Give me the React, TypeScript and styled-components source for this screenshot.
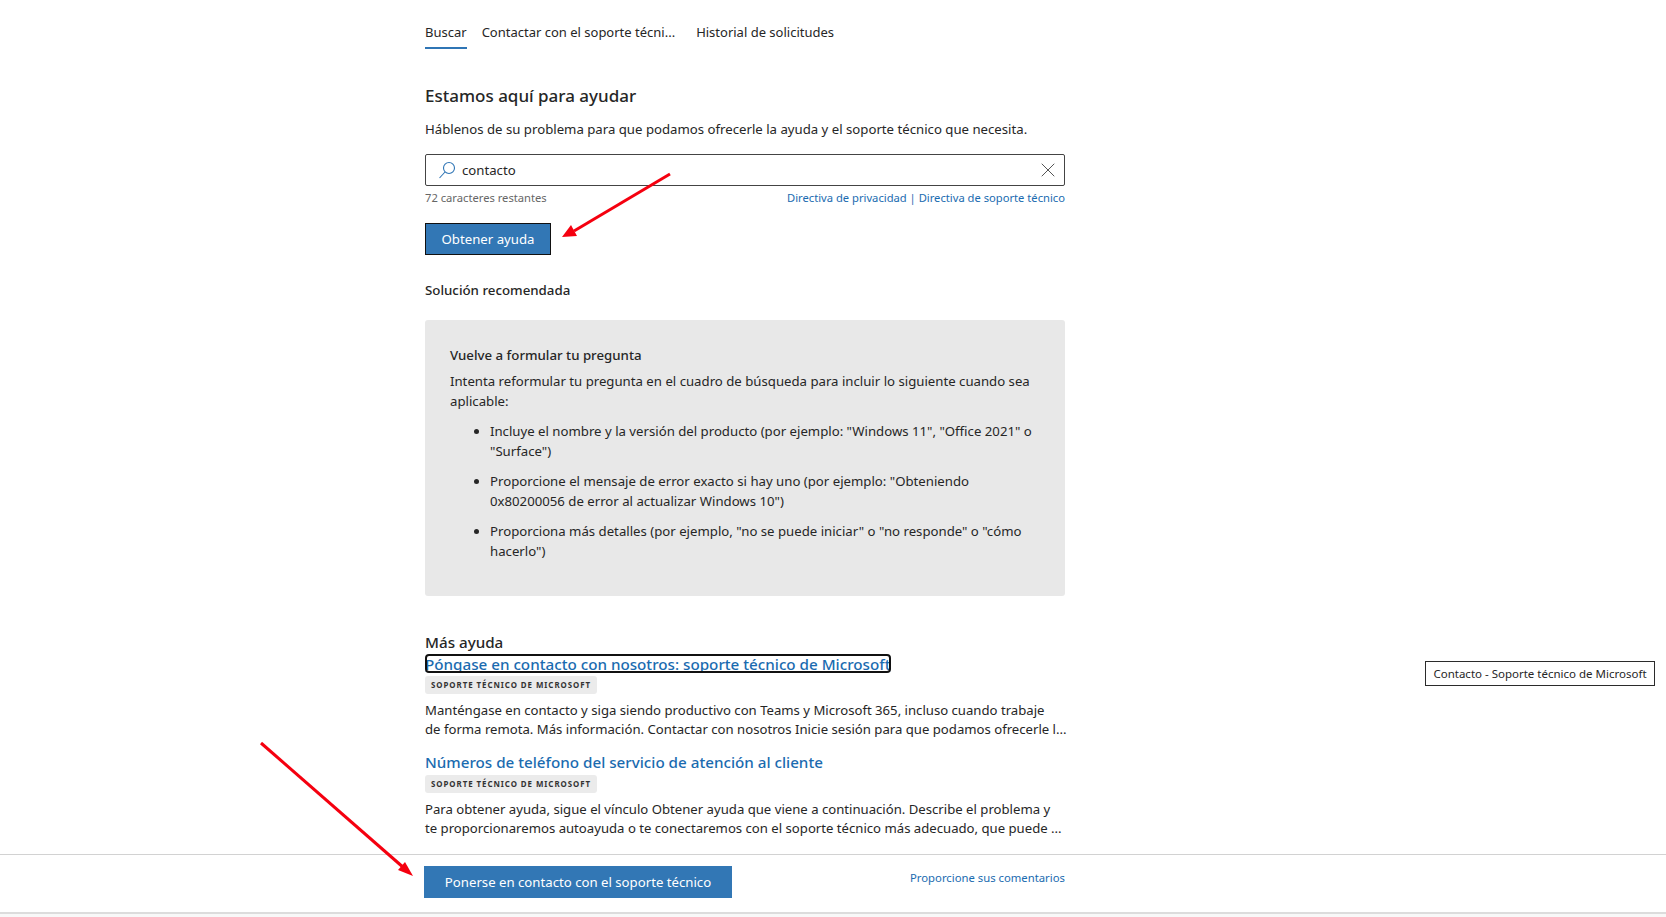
import React from 'react';
import styled, { createGlobalStyle } from 'styled-components';
import { X } from 'lucide-react';

const FONT = '"Noto Sans", "Open Sans", "Liberation Sans", sans-serif';

const GlobalStyle = createGlobalStyle`
  html, body {
    margin: 0;
    padding: 0;
    background: #fff;
    overflow: hidden;
  }
  body {
    font-family: ${FONT};
    color: #262626;
  }
`;

const Page = styled.div`
  position: relative;
  height: 917px;
  display: flex;
  flex-direction: column;
  overflow: hidden;
`;

const Main = styled.main`
  height: 854px;
  padding-left: 425px;
  box-sizing: border-box;
`;

const Column = styled.div`
  width: 640px;
`;

const Tabs = styled.nav`
  display: flex;
  padding-top: 22px;
  height: 49px;
  box-sizing: border-box;
`;

const Tab = styled.a<{ $active?: boolean }>`
  font-size: 13px;
  line-height: 20px;
  margin-right: ${(p) => (p.$active ? '15px' : '21px')};
  height: 27px;
  box-sizing: border-box;
  border-bottom: 2px solid ${(p) => (p.$active ? '#2f75b5' : 'transparent')};
`;

const Heading = styled.h1`
  margin: 35px 0 0;
  font-size: 17px;
  line-height: 24px;
  font-weight: 500;
`;

const Lead = styled.p`
  margin: 11px 0 0;
  font-size: 13.2px;
  line-height: 20px;
`;

const SearchBox = styled.div`
  margin-top: 15px;
  height: 32px;
  box-sizing: border-box;
  border: 1px solid #444;
  border-radius: 2px;
  display: flex;
  align-items: center;
  padding: 0 4px 0 12px;
  font-size: 13.2px;
`;

const SearchIcon = styled.svg`
  width: 18px;
  height: 18px;
  margin-right: 6px;
  fill: none;
  stroke: #2f75b5;
  stroke-width: 1.1;
`;

const SearchText = styled.span`
  flex: 1;
`;

const Clear = styled(X)`
  width: 24px;
  height: 24px;
  color: #555;
`;

const Hints = styled.div`
  margin-top: 4px;
  display: flex;
  justify-content: space-between;
  font-size: 11.2px;
  line-height: 16px;
  color: #666;
`;

const HintLinks = styled.div`
  color: #1a6bb0;
`;

const PrimaryButton = styled.button<{ $outlined?: boolean }>`
  font-family: ${FONT};
  font-size: 13.2px;
  color: #fff;
  background: #3277b5;
  border: ${(p) => (p.$outlined ? '1px solid #111' : 'none')};
  border-radius: 0;
  padding: 0;
  height: 32px;
  cursor: pointer;
`;

const GetHelp = styled(PrimaryButton)`
  display: block;
  margin-top: 17px;
  width: 126px;
`;

const SectionLabel = styled.h2`
  margin: 25px 0 0;
  font-size: 13.3px;
  line-height: 20px;
  font-weight: 500;
`;

const Card = styled.section`
  margin-top: 20px;
  height: 276px;
  box-sizing: border-box;
  background: #e8e8e8;
  border-radius: 3px;
  padding: 25px 25px 0;
  font-size: 13.2px;
  line-height: 20px;
`;

const CardTitle = styled.h3`
  margin: 0;
  font-size: 13.25px;
  line-height: 20px;
  font-weight: 500;
`;

const CardText = styled.p`
  margin: 6px 0 0;
`;

const CardList = styled.ul`
  margin: 10px 0 0;
  padding-left: 40px;
  li + li {
    margin-top: 10px;
  }
`;

const MoreHelp = styled.h2`
  margin: 36px 0 0;
  font-size: 15.2px;
  line-height: 20px;
  font-weight: 500;
`;

const Result = styled.article`
  margin-bottom: 14px;
`;

const ResultTitle = styled.a<{ $focused?: boolean }>`
  display: block;
  color: #1a6bb0;
  font-size: 15.2px;
  line-height: 19px;
  font-weight: 500;
  white-space: nowrap;
  overflow: hidden;
  ${(p) =>
    p.$focused &&
    `
    margin-top: 2px;
    width: 466px;
    height: 19px;
    line-height: 21px;
    outline: 2px solid #111;
    outline-offset: -2px;
    border-radius: 4px;
    text-decoration: underline;
  `}
`;

const Tag = styled.div`
  margin-top: 3px;
  display: flex;
  align-items: center;
  width: 172px;
  height: 18px;
  box-sizing: border-box;
  padding-left: 6px;
  background: #ebebeb;
  border-radius: 3px;
  font-size: 7.9px;
  font-weight: 700;
  letter-spacing: 0.95px;
  color: #333;
`;

const ResultText = styled.p`
  margin: 7px 0 0;
  font-size: 13.15px;
  line-height: 19px;
  white-space: nowrap;
`;

const Footer = styled.footer`
  height: 60px;
  box-sizing: border-box;
  border-top: 1px solid #d2d2d2;
  border-bottom: 2px solid #dcdcdc;
  padding-left: 424px;
  display: flex;
  align-items: flex-start;
`;

const ContactButton = styled(PrimaryButton)`
  margin-top: 11px;
  width: 308px;
`;

const Feedback = styled.a`
  margin-left: 178px;
  margin-top: 15px;
  font-size: 11.3px;
  line-height: 16px;
  color: #1a6bb0;
`;

const FooterFill = styled.div`
  flex: 1;
  background: #f8f8f8;
`;

const Tooltip = styled.div`
  position: absolute;
  left: 1425px;
  top: 661px;
  width: 230px;
  height: 25px;
  box-sizing: border-box;
  border: 1px solid #2b2b2b;
  background: #fff;
  font-size: 11.5px;
  line-height: 23px;
  text-align: center;
  white-space: nowrap;
`;

const ArrowLayer = styled.svg`
  position: absolute;
  inset: 0;
  width: 100%;
  height: 100%;
  pointer-events: none;
`;

const App = () => {
  return (
    <Page>
      <GlobalStyle />
      <Main>
        <Column>
          <Tabs>
            <Tab $active>Buscar</Tab>
            <Tab>Contactar con el soporte técni...</Tab>
            <Tab>Historial de solicitudes</Tab>
          </Tabs>
          <Heading>Estamos aquí para ayudar</Heading>
          <Lead>Háblenos de su problema para que podamos ofrecerle la ayuda y el soporte técnico que necesita.</Lead>
          <SearchBox>
            <SearchIcon viewBox="0 0 18 18">
              <circle cx="11" cy="7" r="5.5" />
              <path d="M7 11L1.5 17" />
            </SearchIcon>
            <SearchText>contacto</SearchText>
            <Clear strokeWidth={1} />
          </SearchBox>
          <Hints>
            <span>72 caracteres restantes</span>
            <HintLinks>Directiva de privacidad | Directiva de soporte técnico</HintLinks>
          </Hints>
          <GetHelp $outlined>Obtener ayuda</GetHelp>
          <SectionLabel>Solución recomendada</SectionLabel>
          <Card>
            <CardTitle>Vuelve a formular tu pregunta</CardTitle>
            <CardText>
              Intenta reformular tu pregunta en el cuadro de búsqueda para incluir lo siguiente cuando sea aplicable:
            </CardText>
            <CardList>
              <li>Incluye el nombre y la versión del producto (por ejemplo: "Windows 11", "Office 2021" o "Surface")</li>
              <li>Proporcione el mensaje de error exacto si hay uno (por ejemplo: "Obteniendo 0x80200056 de error al actualizar Windows 10")</li>
              <li>Proporciona más detalles (por ejemplo, "no se puede iniciar" o "no responde" o "cómo hacerlo")</li>
            </CardList>
          </Card>
          <MoreHelp>Más ayuda</MoreHelp>
          <Result>
            <ResultTitle $focused>Póngase en contacto con nosotros: soporte técnico de Microsoft</ResultTitle>
            <Tag>SOPORTE TÉCNICO DE MICROSOFT</Tag>
            <ResultText>
              Manténgase en contacto y siga siendo productivo con Teams y Microsoft 365, incluso cuando trabaje
              <br />
              de forma remota. Más información. Contactar con nosotros Inicie sesión para que podamos ofrecerle l...
            </ResultText>
          </Result>
          <Result>
            <ResultTitle>Números de teléfono del servicio de atención al cliente</ResultTitle>
            <Tag>SOPORTE TÉCNICO DE MICROSOFT</Tag>
            <ResultText>
              Para obtener ayuda, sigue el vínculo Obtener ayuda que viene a continuación. Describe el problema y
              <br />
              te proporcionaremos autoayuda o te conectaremos con el soporte técnico más adecuado, que puede ...
            </ResultText>
          </Result>
        </Column>
      </Main>
      <Footer>
        <ContactButton>Ponerse en contacto con el soporte técnico</ContactButton>
        <Feedback>Proporcione sus comentarios</Feedback>
      </Footer>
      <FooterFill />
      <Tooltip>Contacto - Soporte técnico de Microsoft</Tooltip>
      <ArrowLayer viewBox="0 0 1666 917">
        <path d="M670 174L574 231" stroke="#f5000f" strokeWidth="3" fill="none" />
        <path d="M562 237L571 225L577 236Z" fill="#f5000f" />
        <path d="M261 743L404 868" stroke="#f5000f" strokeWidth="3" fill="none" />
        <path d="M413 876L405 862L398 870Z" fill="#f5000f" />
      </ArrowLayer>
    </Page>
  );
};

export default App;
